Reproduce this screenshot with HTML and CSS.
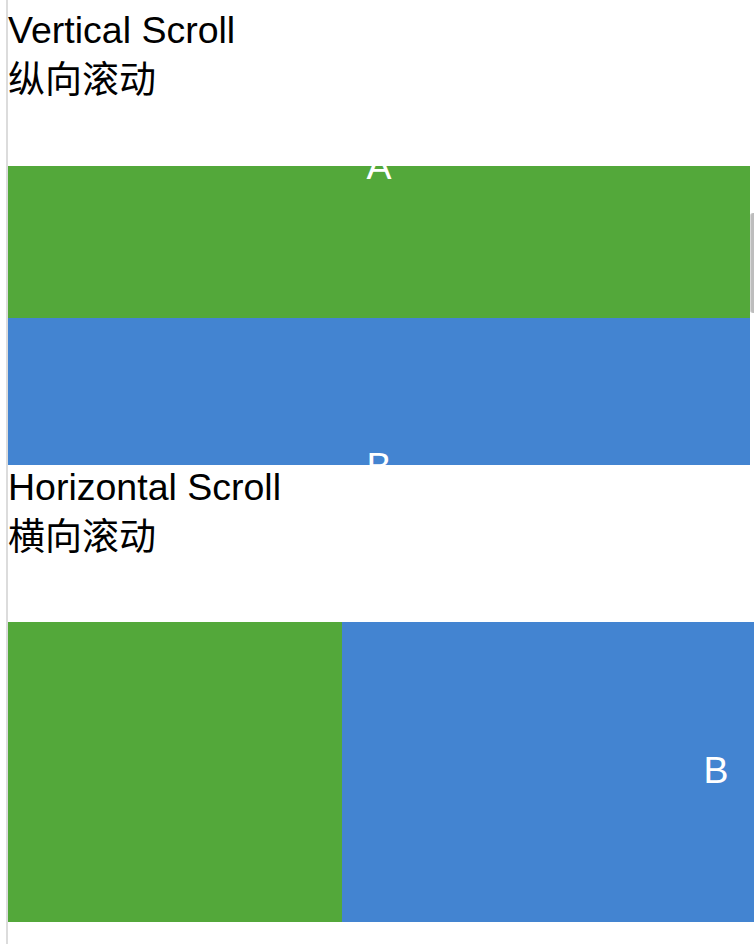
FILE: index.html
```html
<!DOCTYPE html>
<html>
<head>
<meta charset="utf-8">
<link rel="stylesheet" href="styles.css">
</head>
<body>
<div class="page">
  <section class="demo">
    <div class="title">
      <div class="en">Vertical Scroll</div>
      <div class="zh">纵向滚动</div>
    </div>
    <div class="vscroll">
      <div class="vtrack">
        <div class="vcontent">
          <div class="item green">A</div>
          <div class="item blue">B</div>
        </div>
      </div>
      <div class="vbar"><div class="thumb"></div></div>
    </div>
  </section>
  <section class="demo">
    <div class="title">
      <div class="en">Horizontal Scroll</div>
      <div class="zh">横向滚动</div>
    </div>
    <div class="hscroll">
      <div class="item green hfirst">A</div>
      <div class="item blue">B</div>
    </div>
  </section>
</div>
</body>
</html>
```

FILE: styles.css
```css
html, body {
  margin: 0;
  padding: 0;
  background: #ffffff;
  overflow: hidden;
}
.page {
  margin-left: 6px;
  border-left: 2px solid #dcdcdc;
  min-height: 100vh;
  padding-top: 8px;
  box-sizing: border-box;
  font-family: "Liberation Sans", Arial, "Noto Sans CJK SC", sans-serif;
  font-size: 37.5px;
  color: #000;
}
.title {
  height: 157px;
}
.en {
  line-height: 44px;
}
.zh {
  font-family: "Noto Sans CJK SC", sans-serif;
  font-size: 37px;
  line-height: 50px;
}
.item {
  display: flex;
  align-items: center;
  justify-content: center;
  color: #fff;
  height: 300px;
  padding-bottom: 3px;
  box-sizing: border-box;
  flex-shrink: 0;
}
.green { background: #53a83a; }
.blue { background: #4384d1; }
.vscroll {
  display: flex;
  margin-top: 1px;
  height: 299px;
  width: 746px;
}
.vtrack {
  flex: 1;
  overflow: hidden;
}
.vcontent {
  margin-top: -148px;
}
.vbar {
  width: 4px;
}
.thumb {
  margin-top: 47px;
  height: 100px;
  background: #bdbdbd;
  border-left: 1px solid #d8d8d8;
  border-radius: 3px 0 0 3px;
  box-sizing: border-box;
}
.hscroll {
  display: flex;
  height: 300px;
  width: 746px;
  overflow: hidden;
}
.hscroll .item {
  width: 748px;
}
.hfirst {
  margin-left: -414px;
}
```
